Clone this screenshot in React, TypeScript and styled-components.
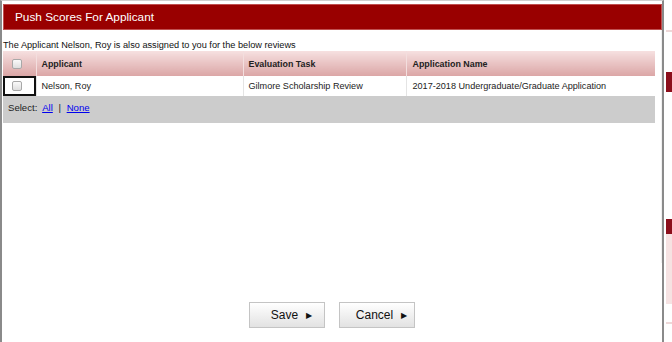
import React from 'react';
import styled, {createGlobalStyle} from 'styled-components';

const GlobalStyle = createGlobalStyle`
    html, body {
        margin: 0;
        padding: 0;
        background: #fff;
    }
    body {
        font-family: "Liberation Sans", Arial, sans-serif;
        color: #222;
    }
`

const rows = [
    {applicant: 'Nelson, Roy', task: 'Gilmore Scholarship Review', app: '2017-2018 Undergraduate/Graduate Application'},
];

export default function App() {
    return (
        <>
            <GlobalStyle/>
            <Page>
                <Dialog>
                    <TitleBar>Push Scores For Applicant</TitleBar>
                    <Body>
                        <Intro>The Applicant Nelson, Roy is also assigned to you for the below reviews</Intro>
                        <Table>
                            <thead>
                            <tr>
                                <HeadCell $width={33}><Check type="checkbox"/></HeadCell>
                                <HeadCell $width={207}>Applicant</HeadCell>
                                <HeadCell $width={163}>Evaluation Task</HeadCell>
                                <HeadCell>Application Name</HeadCell>
                            </tr>
                            </thead>
                            <tbody>
                            {rows.map(r => (
                                <tr key={r.applicant}>
                                    <CheckCell><Check type="checkbox"/></CheckCell>
                                    <Cell>{r.applicant}</Cell>
                                    <Cell>{r.task}</Cell>
                                    <Cell>{r.app}</Cell>
                                </tr>
                            ))}
                            <tr>
                                <SelectCell colSpan={4}>
                                    Select:&nbsp; <Link href="#">All</Link> <Sep>|</Sep> <Link href="#">None</Link>
                                </SelectCell>
                            </tr>
                            </tbody>
                        </Table>
                    </Body>
                    <Actions>
                        <ActionButton>Save <Arrow>▶</Arrow></ActionButton>
                        <ActionButton>Cancel <Arrow>▶</Arrow></ActionButton>
                    </Actions>
                </Dialog>
                <Backdrop>
                    <BackGap $h={30}/>
                    <BackLine/>
                    <BackGap $h={40}/>
                    <BackRed $h={20}/>
                    <BackGap $h={127}/>
                    <BackRed $h={15}/>
                    <BackPink $h={70}/>
                    <BackGap $h={18}/>
                    <BackLine/>
                </Backdrop>
            </Page>
        </>
    );
}

const Page = styled.div`
    display: flex;
    height: 342px;
    width: 672px;
    overflow: hidden;
`

const Dialog = styled.div`
    width: 664px;
    height: 342px;
    box-sizing: border-box;
    border-left: 2px solid #8a8a8a;
    border-right: 2px solid #8a8a8a;
    border-top: 1px solid #d0d0d0;
    padding: 3px 0 0 1px;
    display: flex;
    flex-direction: column;
    background: #fff;
`

const TitleBar = styled.div`
    width: 659px;
    height: 26px;
    box-sizing: border-box;
    background: #990000;
    border: 1px solid #c05050;
    color: #fff;
    font-size: 11.8px;
    line-height: 24px;
    padding-left: 11px;
`

const Body = styled.div`
    width: 659px;
    height: 233px;
    box-sizing: border-box;
    border-right: 1px solid #f0f0f0;
    padding-top: 9px;
`

const Intro = styled.div`
    font-size: 9.2px;
    line-height: 12px;
    color: #111;
`

const Table = styled.table`
    width: 652px;
    table-layout: fixed;
    border-collapse: collapse;
    font-size: 9.1px;
`

const HeadCell = styled.th<{ $width?: number }>`
    box-sizing: border-box;
    width: ${p => p.$width ? `${p.$width}px` : 'auto'};
    height: 25px;
    padding: 0 5px;
    text-align: left;
    font-weight: bold;
    font-size: 8.9px;
    color: #222;
    background: linear-gradient(#f6e0e0, #dba6a6);
    border-right: 1px solid #f3dede;
    white-space: nowrap;
    &:first-child { padding: 0 0 0 9px; }
    &:last-child { border-right: none; padding-left: 6px; }
`

const Cell = styled.td`
    box-sizing: border-box;
    height: 20px;
    padding: 0 5px;
    background: #fff;
    border-right: 1px solid #e4e4e4;
    color: #222;
    white-space: nowrap;
    &:last-child { border-right: none; padding-left: 6px; }
`

const CheckCell = styled(Cell)`
    padding: 0 0 0 9px;
    outline: 2px solid #111;
    outline-offset: -2px;
`

const Check = styled.input`
    appearance: none;
    display: block;
    width: 10px;
    height: 10px;
    margin: 0;
    border: 1px solid #a8a8a8;
    border-radius: 2px;
    background: linear-gradient(#fafafa, #dedede);
`

const SelectCell = styled.td`
    height: 27px;
    padding: 0 0 0 5px;
    vertical-align: top;
    line-height: 23px;
    font-size: 9.6px;
    background: #cccccc;
    color: #222;
`

const Link = styled.a`
    color: #0000ee;
    text-decoration: underline;
`

const Sep = styled.span`
    margin: 0 3px;
`

const Actions = styled.div`
    display: flex;
    justify-content: center;
    gap: 14px;
    padding: 39px 2px 0 0;
`

const ActionButton = styled.button`
    width: 76px;
    height: 26px;
    box-sizing: border-box;
    border: 1px solid #c4c4c4;
    background: linear-gradient(#ffffff, #e2e2e2);
    font-family: "Liberation Sans", Arial, sans-serif;
    font-size: 12px;
    color: #111;
    padding: 0 0 0 10px;
    display: flex;
    align-items: center;
    justify-content: center;
    gap: 8px;
`

const Arrow = styled.span`
    font-size: 8px;
`

const Backdrop = styled.div`
    flex: 1;
    display: flex;
    flex-direction: column;
    padding-left: 2px;
    background: #fff;
`

const BackGap = styled.div<{ $h: number }>`
    height: ${p => p.$h}px;
`

const BackLine = styled.div`
    height: 2px;
    background: #eed8d8;
`

const BackRed = styled.div<{ $h: number }>`
    height: ${p => p.$h}px;
    background: #8c0f1c;
`

const BackPink = styled.div<{ $h: number }>`
    height: ${p => p.$h}px;
    background: #f6e2e2;
`
